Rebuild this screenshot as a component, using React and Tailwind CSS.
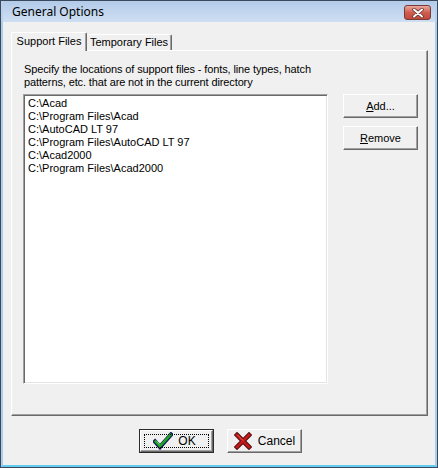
import React from 'react';

const paths = [
  'C:\\Acad',
  'C:\\Program Files\\Acad',
  'C:\\AutoCAD LT 97',
  'C:\\Program Files\\AutoCAD LT 97',
  'C:\\Acad2000',
  'C:\\Program Files\\Acad2000',
];

const raised =
  'border border-t-white border-l-white border-r-[#696969] border-b-[#696969] shadow-[inset_-1px_-1px_0_#a0a0a0]';

function PushButton({ children, className = '' }) {
  return (
    <div className={`w-[75px] h-[24px] bg-[#f0f0f0] ${raised} flex items-center justify-center ${className}`}>
      {children}
    </div>
  );
}

function CheckIcon() {
  return (
    <svg width="20" height="18" viewBox="0 0 20 18">
      <path d="M2 9.5 L7 15 L18 2.5" fill="none" stroke="#0b1c5a" strokeWidth="4.2" strokeLinecap="square" strokeLinejoin="miter" />
      <path d="M2.6 9.5 L7 14.2 L17.4 2.8" fill="none" stroke="#21a621" strokeWidth="2.4" strokeLinecap="square" />
      <path d="M3.5 9.2 L7 12.8" fill="none" stroke="#7de07d" strokeWidth="0.9" />
    </svg>
  );
}

function CrossIcon() {
  return (
    <svg width="18" height="18" viewBox="0 0 18 18">
      <path d="M3 3 L15 15 M15 3 L3 15" fill="none" stroke="#4a0a0a" strokeWidth="4.6" strokeLinecap="square" />
      <path d="M3 3 L15 15 M15 3 L3 15" fill="none" stroke="#c21818" strokeWidth="2.8" strokeLinecap="square" />
      <path d="M3.5 3 L9 8.5" fill="none" stroke="#f06060" strokeWidth="0.9" />
    </svg>
  );
}

export default function App() {
  return (
    <div className="w-[438px] h-[468px] flex flex-col border border-[#3a4a5c] bg-[#f0f0f0] font-['Liberation_Sans',Arial,sans-serif] text-[11px] text-black select-none">
      {/* title bar */}
      <div className="h-[21px] flex items-center justify-between pl-[9px] pr-[4px] bg-gradient-to-b from-[#b3cbe9] to-[#cfdff2] border-x-2 border-[#b9d1ec]">
        <span className="font-['Noto_Sans',sans-serif] text-[12px] text-black leading-none pt-[1px]">General Options</span>
        <div className="w-[27px] h-[15px] mt-[2px] rounded-[3px] border border-[#7a3a36] bg-gradient-to-b from-[#e8a89e] via-[#cf5e4f] to-[#c1493a] flex items-center justify-center">
          <svg width="12" height="10" viewBox="0 0 12 10">
            <path d="M2 1.5 L10 8.5 M10 1.5 L2 8.5" stroke="#5a2a26" strokeWidth="3.4" strokeLinecap="round" />
            <path d="M2 1.5 L10 8.5 M10 1.5 L2 8.5" stroke="#ffffff" strokeWidth="2" strokeLinecap="round" />
          </svg>
        </div>
      </div>

      {/* client area */}
      <div className="flex-1 flex flex-col border-x-2 border-b-2 border-x-[#a9cdea] border-b-[#62cdf0] pt-[10px]">
        {/* tabs */}
        <div className="flex items-end pl-[8px] h-[18px]">
          <div className="relative z-10 -mb-px h-[19px] w-[76px] bg-[#f0f0f0] border-t border-l border-white border-r border-r-[#696969] shadow-[inset_-1px_0_0_#a0a0a0] rounded-t-[2px] flex items-center justify-center pb-[1px]">
            Support Files
          </div>
          <div className="h-[16px] w-[85px] bg-[#f0f0f0] border-t border-white border-r border-r-[#696969] shadow-[inset_-1px_0_0_#a0a0a0] rounded-t-[2px] flex items-center justify-center">
            Temporary Files
          </div>
        </div>

        {/* tab panel */}
        <div className="ml-[8px] mr-[7px] h-[366px] border border-t-white border-l-white border-r-[#696969] border-b-[#696969] shadow-[inset_-1px_-1px_0_#a0a0a0] pl-[11px] pr-[8px] pt-[12px]">
          <p className="leading-[13px] pl-[1px] tracking-[-0.12px]">
            Specify the locations of support files - fonts, line types, hatch
            <br />
            patterns, etc. that are not in the current directory
          </p>
          <div className="flex gap-[15px] mt-[5px]">
            <div className="w-[305px] h-[290px] bg-white border border-t-[#a0a0a0] border-l-[#a0a0a0] border-r-white border-b-white shadow-[inset_1px_1px_0_#696969,inset_-1px_-1px_0_#e3e3e3] px-[4px] pt-[2px]">
              {paths.map((p) => (
                <div key={p} className="leading-[13px] whitespace-nowrap">{p}</div>
              ))}
            </div>
            <div className="flex flex-col gap-[8px]">
              <PushButton>
                <span><span className="underline">A</span>dd...</span>
              </PushButton>
              <PushButton>
                <span><span className="underline">R</span>emove</span>
              </PushButton>
            </div>
          </div>
        </div>

        {/* dialog buttons */}
        <div className="flex justify-center gap-[13px] pl-[3px] mt-[13px]">
          <div className="relative w-[75px] h-[24px] border border-[#2a2a2a]">
            <div className={`w-full h-full bg-[#f0f0f0] ${raised} flex items-center justify-center gap-[5px] pr-[4px]`}>
              <CheckIcon />
              <span className="text-[12px]">OK</span>
            </div>
            <div className="absolute inset-[4px] border border-dotted border-black pointer-events-none" />
          </div>
          <PushButton className="gap-[6px]">
            <CrossIcon />
            <span className="text-[12px]">Cancel</span>
          </PushButton>
        </div>
      </div>
    </div>
  );
}
